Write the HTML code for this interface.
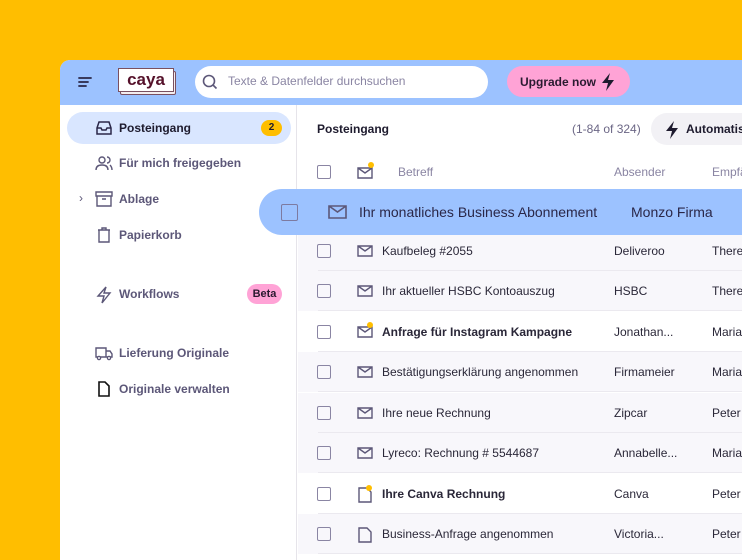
<!DOCTYPE html>
<html><head><meta charset="utf-8"><style>
*{box-sizing:border-box;margin:0;padding:0}
body{width:742px;height:552px;background:#ffbe00;overflow:hidden;position:relative;font-family:"Liberation Sans",sans-serif}
.app{position:absolute;left:60px;top:60px;width:700px;height:500px;background:#fff;border-top-left-radius:10px;overflow:hidden}
.top{position:absolute;left:0;top:0;width:100%;height:45px;background:#9cc2ff}
.side{position:absolute;left:0;top:45px;width:237px;height:460px;border-right:1px solid #e6e4ea;background:#fff}
.nav{position:absolute;left:7px;width:224px;height:32px;border-radius:16px;font-size:12px;font-weight:bold;color:#5c5778}
.nav svg{position:absolute;left:28px;top:8px}
.nav span.t{position:absolute;left:52px;top:9px}
.row{position:absolute;left:238px;width:470px;height:40px;font-size:12px;color:#2a2738}
.row::after{content:"";position:absolute;left:20px;right:0;bottom:0;height:1px;background:#ebe9ef}
.row.g{background:#f8f7fb}
.cb{position:absolute;left:19px;width:14px;height:14px;border:1.5px solid #8a85a3;border-radius:2px;top:13px}
.ic{position:absolute;left:59px;top:13px}
.s{position:absolute;left:84px;top:13px}
.a{position:absolute;left:316px;top:13px}
.e{position:absolute;left:414px;top:13px}
b{font-weight:bold}
.dot{position:absolute;width:6px;height:6px;border-radius:3px;background:#ffbe00}
</style></head><body>
<div class="app">
 <div class="top">
  <svg style="position:absolute;left:18px;top:16px" width="14" height="12"><path d="M1 2h12M1 6h9M1 10h7" stroke="#2a2748" stroke-width="1.8" stroke-linecap="round"/></svg>
  <div style="position:absolute;left:60px;top:11px;width:56px;height:24px;background:#f4eef0;border:1px solid #7a5060;border-radius:2px"></div>
  <div style="position:absolute;left:58px;top:8px;width:56px;height:24px;background:#fff;border:1px solid #7a5060;font-weight:bold;font-size:17px;color:#55112a;text-align:center;line-height:22px">caya</div>
  <div style="position:absolute;left:135px;top:6px;width:293px;height:32px;background:#fff;border-radius:16px"></div>
  <svg style="position:absolute;left:142px;top:14px" width="16" height="16"><circle cx="7" cy="7" r="5.5" fill="none" stroke="#5c5778" stroke-width="1.6"/><path d="M11 11l3.5 3.5" stroke="#5c5778" stroke-width="1.6"/></svg>
  <div style="position:absolute;left:168px;top:14px;font-size:12px;color:#8a85a3">Texte &amp; Datenfelder durchsuchen</div>
  <div style="position:absolute;left:447px;top:6px;width:123px;height:31px;background:#ffa3d6;border-radius:16px;font-size:12px;font-weight:bold;color:#2a1a30;padding:9px 0 0 13px">Upgrade now</div>
  <svg style="position:absolute;left:540px;top:12px" width="16" height="20"><path d="M10 1L2 11h6l-2 8 8-11H8z" fill="#1e1b2e"/></svg>
 </div>
 <div class="side">
  <div class="nav" style="top:7px;background:#d9e6ff;color:#1e1b2e"><svg width="18" height="16"><path d="M2 8l2-6h10l2 6v6H2zM2 8h4l1 2h4l1-2h4" fill="none" stroke="#2a2748" stroke-width="1.5"/></svg><span class="t">Posteingang</span><span style="position:absolute;left:194px;top:8px;width:21px;height:16px;border-radius:8px;background:#ffbe00;font-size:10px;text-align:center;line-height:16px">2</span></div>
  <div class="nav" style="top:42px"><svg width="18" height="16"><circle cx="7" cy="5" r="3" fill="none" stroke="#5c5778" stroke-width="1.4"/><path d="M1 15c0-4 3-5 6-5s6 1 6 5M12 2a3 3 0 010 6M15 10c1 1 2 2 2 5" fill="none" stroke="#5c5778" stroke-width="1.4"/></svg><span class="t">Für mich freigegeben</span></div>
  <div class="nav" style="top:78px"><span style="position:absolute;left:12px;top:8px;font-size:12px;font-weight:normal">›</span><svg width="18" height="16"><path d="M1 1h16v4H1zM2 5v10h14V5M7 8h4" fill="none" stroke="#5c5778" stroke-width="1.4"/></svg><span class="t">Ablage</span></div>
  <div class="nav" style="top:114px"><svg width="18" height="16"><path d="M3 3h12M7 3V1h4v2M4 3v12h10V3" fill="none" stroke="#5c5778" stroke-width="1.4"/></svg><span class="t">Papierkorb</span></div>
  <div class="nav" style="top:173px"><svg width="18" height="18"><path d="M11 1L3 10h6l-2 7 8-10H9z" fill="none" stroke="#5c5778" stroke-width="1.4"/></svg><span class="t">Workflows</span><span style="position:absolute;left:180px;top:6px;width:35px;height:20px;border-radius:10px;background:#ffa3d6;font-size:11px;text-align:center;line-height:20px;color:#2a1a30">Beta</span></div>
  <div class="nav" style="top:232px"><svg width="18" height="16"><path d="M1 3h10v9H1zM11 6h4l2 3v3h-6" fill="none" stroke="#5c5778" stroke-width="1.4"/><circle cx="4" cy="13" r="1.6" fill="#fff" stroke="#5c5778" stroke-width="1.3"/><circle cx="14" cy="13" r="1.6" fill="#fff" stroke="#5c5778" stroke-width="1.3"/></svg><span class="t">Lieferung Originale</span></div>
  <div class="nav" style="top:268px"><svg width="18" height="16"><path d="M4 1h6l4 4v10H4z" fill="none" stroke="#111" stroke-width="1.6"/></svg><span class="t">Originale verwalten</span></div>
 </div>
 <div style="position:absolute;left:257px;top:62px;font-size:12px;font-weight:bold;color:#1e1b2e">Posteingang</div>
 <div style="position:absolute;left:512px;top:62px;font-size:12px;color:#6b6685">(1-84 of 324)</div>
 <div style="position:absolute;left:591px;top:53px;width:120px;height:32px;border-radius:16px;background:#f2f1f5"></div>
 <svg style="position:absolute;left:604px;top:60px" width="16" height="20"><path d="M10 1L2 11h6l-2 8 8-11H8z" fill="#1e1b2e"/></svg>
 <div style="position:absolute;left:626px;top:62px;font-size:12px;font-weight:bold;color:#1e1b2e">Automatisieren</div>
 <div style="position:absolute;left:238px;top:91px;width:470px;height:40px;font-size:12px"><div class="cb" style="top:14px"></div>
  <svg class="ic" style="top:14px" width="16" height="14"><path d="M1 3h14v10H1zM1 3l7 5 7-5" fill="none" stroke="#5c5778" stroke-width="1.4"/></svg><div class="dot" style="left:70px;top:11px"></div>
  <span class="s" style="left:100px;top:14px;color:#8a85a3">Betreff</span><span class="a" style="top:14px;color:#8a85a3">Absender</span><span class="e" style="top:14px;color:#8a85a3">Empfänger</span></div>

 <div class="row g" style="top:171px"><div class="cb"></div><svg class="ic" width="16" height="14"><path d="M1 2h14v10H1zM1 2l7 5 7-5" fill="none" stroke="#5c5778" stroke-width="1.4"/></svg><span class="s">Kaufbeleg #2055</span><span class="a">Deliveroo</span><span class="e">Therese</span></div>
 <div class="row g" style="top:211px"><div class="cb"></div><svg class="ic" width="16" height="14"><path d="M1 2h14v10H1zM1 2l7 5 7-5" fill="none" stroke="#5c5778" stroke-width="1.4"/></svg><span class="s">Ihr aktueller HSBC Kontoauszug</span><span class="a">HSBC</span><span class="e">Therese</span></div>
 <div class="row" style="top:252px"><div class="cb"></div><svg class="ic" width="16" height="14"><path d="M1 2h14v10H1zM1 2l7 5 7-5" fill="none" stroke="#5c5778" stroke-width="1.4"/></svg><div class="dot" style="left:69px;top:10px"></div><span class="s"><b>Anfrage für Instagram Kampagne</b></span><span class="a">Jonathan...</span><span class="e">Maria</span></div>
 <div class="row g" style="top:292px"><div class="cb"></div><svg class="ic" width="16" height="14"><path d="M1 2h14v10H1zM1 2l7 5 7-5" fill="none" stroke="#5c5778" stroke-width="1.4"/></svg><span class="s">Bestätigungserklärung angenommen</span><span class="a">Firmameier</span><span class="e">Maria</span></div>
 <div class="row g" style="top:333px"><div class="cb"></div><svg class="ic" width="16" height="14"><path d="M1 2h14v10H1zM1 2l7 5 7-5" fill="none" stroke="#5c5778" stroke-width="1.4"/></svg><span class="s">Ihre neue Rechnung</span><span class="a">Zipcar</span><span class="e">Peter</span></div>
 <div class="row g" style="top:373px"><div class="cb"></div><svg class="ic" width="16" height="14"><path d="M1 2h14v10H1zM1 2l7 5 7-5" fill="none" stroke="#5c5778" stroke-width="1.4"/></svg><span class="s">Lyreco: Rechnung # 5544687</span><span class="a">Annabelle...</span><span class="e">Maria</span></div>
 <div class="row" style="top:414px"><div class="cb"></div><svg class="ic" style="left:60px" width="14" height="16"><path d="M1 1h8l4 4v10H1z" fill="none" stroke="#5c5778" stroke-width="1.4"/></svg><div class="dot" style="left:68px;top:11px"></div><span class="s"><b>Ihre Canva Rechnung</b></span><span class="a">Canva</span><span class="e">Peter</span></div>
 <div class="row g" style="top:454px"><div class="cb"></div><svg class="ic" style="left:60px" width="14" height="16"><path d="M1 1h8l4 4v10H1z" fill="none" stroke="#5c5778" stroke-width="1.4"/></svg><span class="s">Business-Anfrage angenommen</span><span class="a">Victoria...</span><span class="e">Peter</span></div>
</div>
<div style="position:absolute;left:259px;top:189px;width:500px;height:46px;background:#9cc2ff;border-radius:23px 0 0 23px;font-size:14px;color:#2a2748">
 <div style="position:absolute;left:22px;top:15px;width:17px;height:17px;border:1.5px solid #7d7aa0;border-radius:2px"></div>
 <svg style="position:absolute;left:69px;top:15px" width="19" height="16"><path d="M1 2h17v12H1zM1 2l8.5 6 8.5-6" fill="none" stroke="#5c5778" stroke-width="1.6"/></svg>
 <span style="position:absolute;left:100px;top:15px">Ihr monatliches Business Abonnement</span>
 <span style="position:absolute;left:372px;top:15px">Monzo Firma</span>
</div>
</body></html>
